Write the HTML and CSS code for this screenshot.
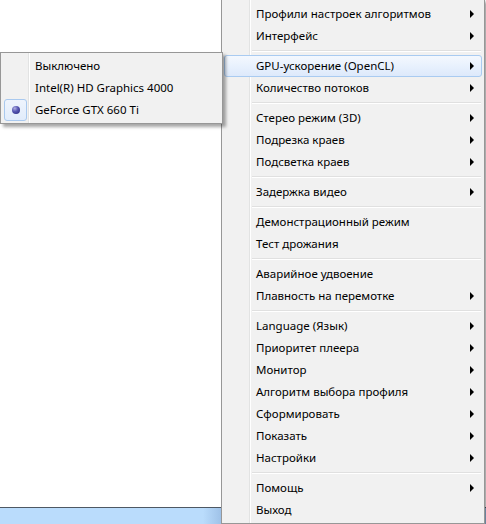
FILE: index.html
```html
<!DOCTYPE html>
<html lang="ru">
<head>
<meta charset="utf-8">
<title>Меню</title>
<link rel="stylesheet" href="styles.css">
</head>
<body>
<div class="desktop">
  <div class="window-area"></div>
  <div class="bottom-bar"></div>

  <div class="menu main-menu">
    <div class="item sub"><span class="label">Профили настроек алгоритмов</span><span class="arrow"></span></div>
    <div class="item sub"><span class="label">Интерфейс</span><span class="arrow"></span></div>
    <div class="sep"></div>
    <div class="item sub hot"><span class="label">GPU-ускорение (OpenCL)</span><span class="arrow"></span></div>
    <div class="item sub"><span class="label">Количество потоков</span><span class="arrow"></span></div>
    <div class="sep"></div>
    <div class="item sub"><span class="label">Стерео режим (3D)</span><span class="arrow"></span></div>
    <div class="item sub"><span class="label">Подрезка краев</span><span class="arrow"></span></div>
    <div class="item sub"><span class="label">Подсветка краев</span><span class="arrow"></span></div>
    <div class="sep"></div>
    <div class="item sub"><span class="label">Задержка видео</span><span class="arrow"></span></div>
    <div class="sep"></div>
    <div class="item"><span class="label">Демонстрационный режим</span></div>
    <div class="item"><span class="label">Тест дрожания</span></div>
    <div class="sep"></div>
    <div class="item"><span class="label">Аварийное удвоение</span></div>
    <div class="item sub"><span class="label">Плавность на перемотке</span><span class="arrow"></span></div>
    <div class="sep"></div>
    <div class="item sub"><span class="label">Language (Язык)</span><span class="arrow"></span></div>
    <div class="item sub"><span class="label">Приоритет плеера</span><span class="arrow"></span></div>
    <div class="item sub"><span class="label">Монитор</span><span class="arrow"></span></div>
    <div class="item sub"><span class="label">Алгоритм выбора профиля</span><span class="arrow"></span></div>
    <div class="item sub"><span class="label">Сформировать</span><span class="arrow"></span></div>
    <div class="item sub"><span class="label">Показать</span><span class="arrow"></span></div>
    <div class="item sub"><span class="label">Настройки</span><span class="arrow"></span></div>
    <div class="sep"></div>
    <div class="item sub"><span class="label">Помощь</span><span class="arrow"></span></div>
    <div class="item"><span class="label">Выход</span></div>
  </div>

  <div class="menu sub-menu">
    <div class="item"><span class="label">Выключено</span></div>
    <div class="item"><span class="label">Intel(R) HD Graphics 4000</span></div>
    <div class="item checked"><span class="check"><span class="dot"></span></span><span class="label">GeForce GTX 660 Ti</span></div>
  </div>
</div>
</body>
</html>
```
FILE: styles.css
```css
html, body {
  margin: 0;
  padding: 0;
  background: #ffffff;
}

.desktop {
  position: relative;
  width: 486px;
  height: 524px;
  overflow: hidden;
  display: flex;
  flex-direction: column;
  font-family: "Noto Sans", "Open Sans", sans-serif;
  font-size: 11.5px;
  color: #000;
}

.window-area {
  flex: 1;
  background: #ffffff;
}

.bottom-bar {
  height: 16px;
  border-top: 1px solid #4e5863;
  background: linear-gradient(to right, #badcfc 0, #badcfc 203px, #9fc2e8 221px);
}

.menu {
  position: absolute;
  box-sizing: border-box;
  border: 1px solid #979797;
  background-color: #f1f1f1;
  background-image: linear-gradient(to right,
    transparent 0, transparent 27px,
    #e2e3e3 27px, #e2e3e3 28px,
    #ffffff 28px, #ffffff 29px,
    transparent 29px);
  background-origin: padding-box;
  background-repeat: no-repeat;
  box-shadow: 3px 3px 3px rgba(0, 0, 0, 0.35);
  display: flex;
  flex-direction: column;
}

.main-menu {
  left: 221px;
  top: -1px;
  width: 264px;
  padding: 3px 2px 2px 2px;
  z-index: 1;
}

.sub-menu {
  left: 0;
  top: 52px;
  width: 223px;
  padding: 2px 2px 2px 2px;
  z-index: 2;
}

.item {
  box-sizing: border-box;
  height: 22px;
  display: flex;
  align-items: center;
  padding-left: 32px;
  padding-right: 7px;
  border: 1px solid transparent;
  border-radius: 3px;
  position: relative;
  white-space: nowrap;
}

.item .label {
  flex: 1;
  line-height: 16px;
  margin-left: -1px;
}

.arrow {
  width: 0;
  height: 0;
  border-left: 4px solid #000;
  border-top: 4px solid transparent;
  border-bottom: 4px solid transparent;
}

.item.hot {
  border-color: #a9cbf1;
  background: linear-gradient(to bottom, #f4f8fe 0%, #e8f1fd 50%, #dde9fb 100%);
}

.sep {
  height: 0;
  margin: 3px 1px 3px 28px;
  border-top: 1px solid #e0e0e0;
  border-bottom: 1px solid #ffffff;
}

.check {
  position: absolute;
  left: 0;
  top: -1px;
  box-sizing: border-box;
  width: 23px;
  height: 22px;
  border: 1px solid #a9c9ef;
  border-radius: 3px;
  background: linear-gradient(to bottom, #eef4fd, #e1ecfb);
  display: flex;
  align-items: center;
  justify-content: center;
}

.dot {
  width: 8px;
  height: 8px;
  border-radius: 50%;
  background: radial-gradient(circle at 35% 30%, #b0b0e4 0, #5a5ab4 40%, #23237a 100%);
}
```
